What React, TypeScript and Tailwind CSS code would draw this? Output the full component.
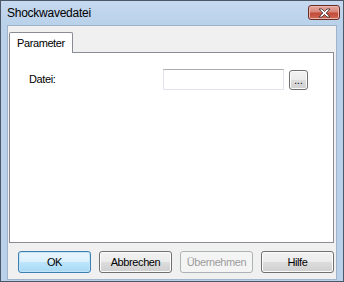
import React from "react";

function Btn({
  label,
  primary,
  disabled,
}: {
  label: string;
  primary?: boolean;
  disabled?: boolean;
}) {
  const base =
    "w-[73px] h-[22px] rounded-[3px] flex items-center justify-center text-[11px] tracking-[-0.4px] leading-none";
  if (primary) {
    return (
      <div
        className={`${base} border border-[#3c7fb1] text-black bg-[linear-gradient(to_bottom,#eaf6fd_0%,#d9f0fc_50%,#bee6fd_50%,#a7d9f5_100%)] shadow-[inset_0_0_0_1px_#c2e4f6]`}
      >
        {label}
      </div>
    );
  }
  if (disabled) {
    return (
      <div className={`${base} border border-[#adb2b5] text-[#9d9d9d] bg-[#f4f4f4]`}>
        {label}
      </div>
    );
  }
  return (
    <div
      className={`${base} border border-[#707070] text-black bg-[linear-gradient(to_bottom,#f2f2f2_0%,#ebebeb_50%,#dddddd_50%,#cfcfcf_100%)] shadow-[inset_0_0_0_1px_#fcfcfc]`}
    >
      {label}
    </div>
  );
}

export default function App() {
  return (
    <div
      className="w-[344px] h-[282px] border border-[#4c5868] bg-[#b9d1ea] flex flex-col"
      style={{ fontFamily: '"Liberation Sans", Arial, sans-serif' }}
    >
      {/* Title bar */}
      <div className="h-[24px] flex items-start bg-[linear-gradient(to_bottom,#c6d9ef,#b9d1ea)]">
        <div className="pl-[6px] pt-[6px] text-[12px] tracking-[-0.25px] leading-none text-black flex-1">
          Shockwavedatei
        </div>
        <div className="mt-[4px] mr-[3px] w-[32px] h-[15px] rounded-[3px] border border-[#6b2b25] bg-[linear-gradient(to_bottom,#e8a89e_0%,#d7867a_45%,#c24a38_55%,#cf6a55_100%)] flex items-center justify-center shadow-[inset_0_0_0_1px_#eab7ae]">
          <svg width="13" height="10" viewBox="0 0 13 10">
            <path
              d="M1 1 H4 L6.5 3.5 L9 1 H12 L8.2 5 L12 9 H9 L6.5 6.5 L4 9 H1 L4.8 5 Z"
              fill="#ffffff"
              stroke="#4a3a3a"
              strokeWidth="0.9"
              strokeLinejoin="round"
            />
          </svg>
        </div>
      </div>

      {/* Client area */}
      <div className="flex-1 mx-[6px] mb-[1px] border border-[#9fb4cc] bg-[#f0f0f0] flex flex-col text-black">
        <div className="pt-[6px] pl-[1px] flex flex-col">
          {/* Tab header */}
          <div className="flex">
            <div className="w-[64px] h-[21px] -mb-[1px] border border-[#898c95] border-b-0 bg-white rounded-t-[2px] flex items-center pl-[7px] text-[11px] tracking-[-0.4px] leading-none relative z-10">
              Parameter
            </div>
          </div>
          {/* Tab panel */}
          <div className="w-[325px] h-[191px] border border-[#898c95] bg-white">
            <div className="flex items-center pt-[16px]">
              <div className="w-[153px] pl-[19px] text-[11px] tracking-[-0.4px] leading-none">
                Datei:
              </div>
              <div className="w-[121px] h-[21px] border border-[#e2e3ea] border-t-[#abadb3] bg-white" />
              <div className="ml-[5px] w-[19px] h-[20px] rounded-[3px] border border-[#707070] bg-[linear-gradient(to_bottom,#f2f2f2_0%,#ebebeb_50%,#dddddd_50%,#cfcfcf_100%)] shadow-[inset_0_0_0_1px_#fcfcfc] flex items-end justify-center pb-[3px] text-[10px] leading-none">
                ...
              </div>
            </div>
          </div>
        </div>
        {/* Buttons */}
        <div className="flex gap-[8px] pl-[10px] pt-[8px]">
          <Btn label="OK" primary />
          <Btn label="Abbrechen" />
          <Btn label="Übernehmen" disabled />
          <Btn label="Hilfe" />
        </div>
      </div>
    </div>
  );
}
